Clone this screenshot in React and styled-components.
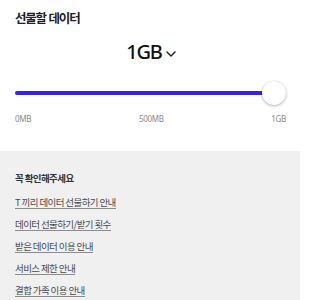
import React from "react";
import styled, { createGlobalStyle } from "styled-components";

const Global = createGlobalStyle`
  html, body { margin: 0; padding: 0; background: #fff; }
  body { width: 300px; height: 300px; overflow: hidden; font-family: "Noto Sans CJK KR", "Noto Sans", sans-serif; }
`;

const Page = styled.div`
  width: 300px;
  height: 300px;
  display: flex;
  flex-direction: column;
`;

const Top = styled.section`
  background: #fff;
  padding: 10px 14px 0 15px;
  height: 151px;
  box-sizing: border-box;
  display: flex;
  flex-direction: column;
`;

const Title = styled.h2`
  margin: 0;
  font-size: 12.5px;
  line-height: 16px;
  font-weight: 700;
  color: #222;
  letter-spacing: -1.2px;
  word-spacing: 1px;
`;

const AmountRow = styled.div`
  display: flex;
  justify-content: center;
  align-items: center;
  gap: 4px;
  margin-top: 14px;
  padding-left: 1px;
`;

const Amount = styled.span`
  font-family: "Noto Sans", sans-serif;
  font-size: 20px;
  line-height: 24px;
  font-weight: 500;
  color: #111;
  letter-spacing: -1.2px;
`;

const SliderWrap = styled.div`
  position: relative;
  height: 24px;
  margin-top: 17px;
  display: flex;
  align-items: center;
`;

const Track = styled.div`
  flex: 1;
  height: 4.5px;
  border-radius: 3px;
  background: #3a1fe6;
  margin-right: 10px;
`;

const Thumb = styled.div`
  position: absolute;
  right: 0;
  top: 0;
  width: 24px;
  height: 24px;
  border-radius: 50%;
  background: #fff;
  box-shadow: 0 1px 3px rgba(0, 0, 0, 0.28), 0 0 1px rgba(0, 0, 0, 0.2);
`;

const Labels = styled.div`
  display: flex;
  justify-content: space-between;
  margin-top: 9px;
`;

const Label = styled.span`
  font-family: "Noto Sans", sans-serif;
  font-size: 8px;
  line-height: 10px;
  color: #8a8a8a;
  letter-spacing: -0.3px;
`;

const Info = styled.section`
  flex: 1;
  background: #f0f0f1;
  padding: 21px 15px 0;
  display: flex;
  flex-direction: column;
  align-items: flex-start;
`;

const InfoTitle = styled.h3`
  margin: 0 0 3px;
  font-size: 9.5px;
  line-height: 12px;
  font-weight: 700;
  color: #333;
  letter-spacing: -0.6px;
`;

const LinkItem = styled.a`
  display: block;
  font-size: 9.5px;
  line-height: 11px;
  margin-top: 10px;
  color: #4a4a4a;
  letter-spacing: -0.6px;
  text-decoration: none;
  border-bottom: 1px solid #8c8c8c;
`;

const Chevron = () => (
  <svg width="10" height="6" viewBox="0 0 10 6" style={{ marginTop: 3 }}>
    <path d="M1 1l4 4 4-4" fill="none" stroke="#222" strokeWidth="1.5" strokeLinecap="round" strokeLinejoin="round" />
  </svg>
);

const links = [
  "T 끼리 데이터 선물하기 안내",
  "데이터 선물하기/받기 횟수",
  "받은 데이터 이용 안내",
  "서비스 제한 안내",
  "결합 가족 이용 안내",
];

export default function App() {
  return (
    <Page>
      <Global />
      <Top>
        <Title>선물할 데이터</Title>
        <AmountRow>
          <Amount>1GB</Amount>
          <Chevron />
        </AmountRow>
        <SliderWrap>
          <Track />
          <Thumb />
        </SliderWrap>
        <Labels>
          <Label>0MB</Label>
          <Label>500MB</Label>
          <Label>1GB</Label>
        </Labels>
      </Top>
      <Info>
        <InfoTitle>꼭 확인해주세요</InfoTitle>
        {links.map((l) => (
          <LinkItem key={l}>{l}</LinkItem>
        ))}
      </Info>
    </Page>
  );
}
